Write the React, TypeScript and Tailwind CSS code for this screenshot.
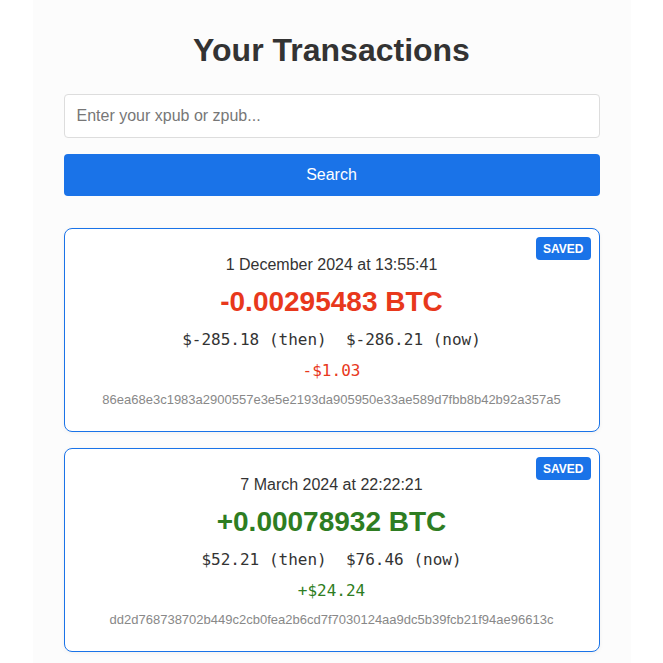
import React from "react";

type Tx = {
  date: string;
  amount: string;
  then: string;
  now: string;
  diff: string;
  hash: string;
  positive: boolean;
};

const txs: Tx[] = [
  {
    date: "1 December 2024 at 13:55:41",
    amount: "-0.00295483 BTC",
    then: "$-285.18",
    now: "$-286.21",
    diff: "-$1.03",
    hash: "86ea68e3c1983a2900557e3e5e2193da905950e33ae589d7fbb8b42b92a357a5",
    positive: false,
  },
  {
    date: "7 March 2024 at 22:22:21",
    amount: "+0.00078932 BTC",
    then: "$52.21",
    now: "$76.46",
    diff: "+$24.24",
    hash: "dd2d768738702b449c2cb0fea2b6cd7f7030124aa9dc5b39fcb21f94ae96613c",
    positive: true,
  },
];

function TxCard({ tx }: { tx: Tx }) {
  const color = tx.positive ? "text-[#2e7d22]" : "text-[#e8381c]";
  return (
    <div className="relative rounded-[8px] border border-[#1a73e8] bg-white px-4 pt-[24px] pb-[22px] text-center shadow-[0_1px_4px_rgba(0,0,0,0.05)]">
      <span className="absolute top-[8px] right-[8px] flex h-[23px] items-center rounded-[4px] bg-[#1a73e8] px-[7px] text-[12px] font-bold text-white">
        SAVED
      </span>
      <div className="text-[16px] leading-[24px] text-[#333]">{tx.date}</div>
      <div className={`mt-[7px] text-[28px] font-bold leading-[36px] ${color}`}>{tx.amount}</div>
      <div className="mt-[8px] whitespace-pre font-['DejaVu_Sans_Mono',monospace] text-[16px] leading-[24px] text-[#333]">
        {`${tx.then} (then)  ${tx.now} (now)`}
      </div>
      <div className={`mt-[7px] font-['DejaVu_Sans_Mono',monospace] text-[16px] leading-[24px] ${color}`}>
        {tx.diff}
      </div>
      <div className="mt-[8px] text-[13px] leading-[18px] text-[#888]">{tx.hash}</div>
    </div>
  );
}

export default function App() {
  return (
    <div className="min-h-screen bg-white font-['Liberation_Sans',Arial,sans-serif]">
      <div className="mx-auto min-h-screen w-[598px] bg-[#fcfcfc] px-[31px] pt-[30px] pb-8">
        <h1 className="text-center text-[32px] font-bold leading-[40px] text-[#333]">Your Transactions</h1>
        <input
          type="text"
          placeholder="Enter your xpub or zpub..."
          className="mt-[24px] block h-[44px] w-full rounded-[4px] border border-[#ddd] bg-white px-[12px] text-[16px] text-[#333] placeholder:text-[#777] outline-none"
        />
        <button className="mt-[16px] block h-[42px] w-full rounded-[4px] bg-[#1a73e8] text-[16px] text-white">
          Search
        </button>
        <div className="mt-[32px] flex flex-col gap-[16px]">
          {txs.map((tx) => (
            <TxCard key={tx.hash} tx={tx} />
          ))}
        </div>
      </div>
    </div>
  );
}
